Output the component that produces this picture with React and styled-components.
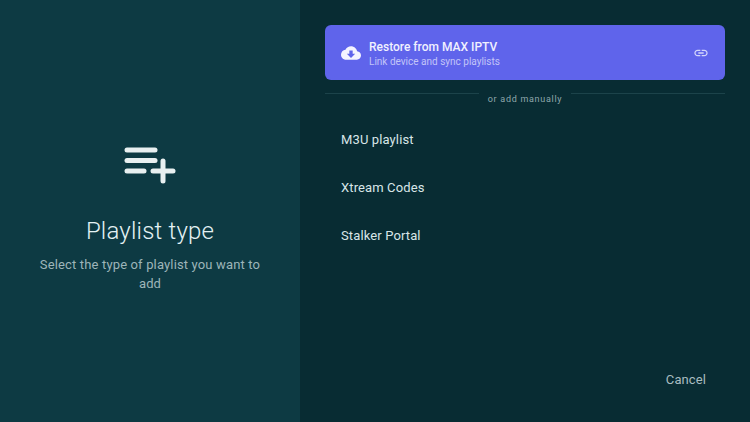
import React from 'react';
import styled, { createGlobalStyle } from 'styled-components';

const Global = createGlobalStyle`
  html, body {
    margin: 0;
    padding: 0;
    background: #082c33;
    font-family: Roboto, "Liberation Sans", sans-serif;
  }
`
const Screen = styled.div`
  width: 750px;
  height: 422px;
  display: flex;
  overflow: hidden;
`
const Side = styled.div`
  width: 300px;
  height: 100%;
  box-sizing: border-box;
  padding: 18px 30px 0;
  background-color: #0d3a43;
  display: flex;
  flex-direction: column;
  align-items: center;
  justify-content: center;
  text-align: center;
`
const Title = styled.h1`
  margin: 32px 0 0;
  font-size: 24px;
  line-height: 30px;
  font-weight: 300;
  letter-spacing: 0.2px;
  color: #e4f2f4;
`
const Subtitle = styled.p`
  margin: 9px 0 0;
  font-size: 13px;
  line-height: 19px;
  letter-spacing: 0.15px;
  color: #9db5b9;
`
const Main = styled.div`
  flex: 1;
  box-sizing: border-box;
  padding: 25px 25px 34px;
  background-color: #082c33;
  display: flex;
  flex-direction: column;
`
const RestoreCard = styled.div`
  height: 55px;
  box-sizing: border-box;
  padding: 0 16px;
  border-radius: 6px;
  background-color: #5f64eb;
  display: flex;
  align-items: center;
  gap: 8px;
`
const CardText = styled.div`
  flex: 1;
  padding-top: 1px;
  display: flex;
  flex-direction: column;
`
const CardTitle = styled.div`
  font-size: 12px;
  line-height: 16px;
  font-weight: 500;
  color: #f1f1ff;
`
const CardSub = styled.div`
  font-size: 10px;
  line-height: 13px;
  color: #c3c5f8;
`
const Divider = styled.div`
  display: flex;
  align-items: flex-start;
  height: 22px;
  margin-top: 13px;
  gap: 9px;
`
const Rule = styled.div`
  flex: 1;
  height: 1px;
  background-color: #1c434a;
`
const DividerLabel = styled.span`
  margin-top: 1px;
  font-size: 9px;
  line-height: 11px;
  font-weight: 400;
  letter-spacing: 0.7px;
  color: #8fa8ac;
`
const Option = styled.div`
  height: 48px;
  padding-left: 16px;
  display: flex;
  align-items: center;
  font-size: 13px;
  font-weight: 400;
  letter-spacing: 0.12px;
  color: #d8e6e8;
`
const Footer = styled.div`
  margin-top: auto;
  display: flex;
  justify-content: flex-end;
`
const Cancel = styled.span`
  padding-right: 19px;
  font-size: 13px;
  line-height: 16px;
  letter-spacing: 0.1px;
  color: #a9bdc0;
`

const PlaylistAdd = () => (
  <svg width="52" height="37" viewBox="0 0 52 37" style={{ display: 'block' }}>
    <g stroke="#e8f0f1" strokeWidth="5" strokeLinecap="round" fill="none">
      <path d="M3 3h28" />
      <path d="M3 13.5h28" />
      <path d="M3 24h17" />
      <path d="M29 24h20" />
      <path d="M39 14v20" />
    </g>
  </svg>
)

const CloudDownload = () => (
  <svg width="20" height="20" viewBox="0 0 24 24" style={{ flexShrink: 0 }}>
    <path
      fill="#f4f4ff"
      d="M19.35 10.04C18.67 6.59 15.64 4 12 4 9.11 4 6.6 5.64 5.35 8.04 2.34 8.36 0 10.91 0 14c0 3.31 2.69 6 6 6h13c2.76 0 5-2.24 5-5 0-2.64-2.05-4.78-4.65-4.96zM17 13l-5 5-5-5h3V9h4v4h3z"
    />
  </svg>
)

const LinkIcon = () => (
  <svg width="16" height="16" viewBox="0 0 24 24" style={{ flexShrink: 0 }}>
    <path
      fill="#d3d5fb"
      d="M3.9 12c0-1.71 1.39-3.1 3.1-3.1h4V7H7c-2.76 0-5 2.24-5 5s2.24 5 5 5h4v-1.9H7c-1.71 0-3.1-1.39-3.1-3.1zM8 13h8v-2H8v2zm9-6h-4v1.9h4c1.71 0 3.1 1.39 3.1 3.1s-1.39 3.1-3.1 3.1h-4V17h4c2.76 0 5-2.24 5-5s-2.24-5-5-5z"
    />
  </svg>
)

export default function App() {
  return (
    <Screen>
      <Global />
      <Side>
        <PlaylistAdd />
        <Title>Playlist type</Title>
        <Subtitle>Select the type of playlist you want to add</Subtitle>
      </Side>
      <Main>
        <RestoreCard>
          <CloudDownload />
          <CardText>
            <CardTitle>Restore from MAX IPTV</CardTitle>
            <CardSub>Link device and sync playlists</CardSub>
          </CardText>
          <LinkIcon />
        </RestoreCard>
        <Divider>
          <Rule />
          <DividerLabel>or add manually</DividerLabel>
          <Rule />
        </Divider>
        <Option>M3U playlist</Option>
        <Option>Xtream Codes</Option>
        <Option>Stalker Portal</Option>
        <Footer>
          <Cancel>Cancel</Cancel>
        </Footer>
      </Main>
    </Screen>
  )
}
